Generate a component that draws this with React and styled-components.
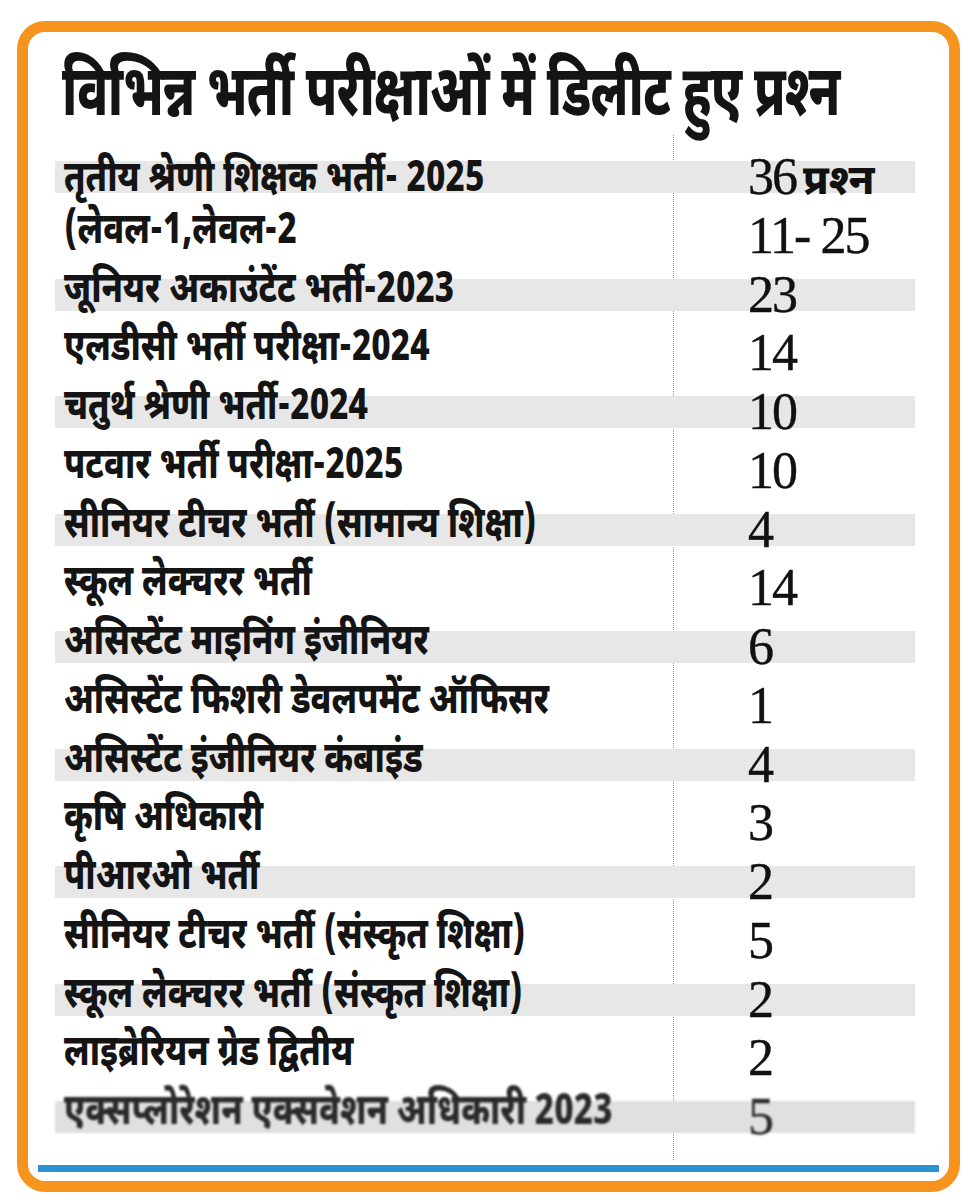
import React from "react";
import styled, { createGlobalStyle } from "styled-components";

const GlobalStyle = createGlobalStyle`
  html, body {
    margin: 0;
    padding: 0;
    background: #ffffff;
  }
  body {
    font-family: "Noto Sans Devanagari", "Lohit Devanagari", "Noto Sans", sans-serif;
    color: #141414;
  }
`;

const DEVA = `"Noto Sans Devanagari", "Lohit Devanagari", "Noto Sans", sans-serif`;

const rows = [
  { label: "तृतीय श्रेणी शिक्षक भर्ती- 2025", count: "36", unit: "प्रश्\u200Dन" },
  { label: "(लेवल-1,लेवल-2", count: "11- 25" },
  { label: "जूनियर अकाउंटेंट भर्ती-2023", count: "23" },
  { label: "एलडीसी भर्ती परीक्षा-2024", count: "14" },
  { label: "चतुर्थ श्रेणी भर्ती-2024", count: "10" },
  { label: "पटवार भर्ती परीक्षा-2025", count: "10" },
  { label: "सीनियर टीचर भर्ती (सामान्य शिक्षा)", count: "4" },
  { label: "स्कूल लेक्चरर भर्ती", count: "14" },
  { label: "असिस्टेंट माइनिंग इंजीनियर", count: "6" },
  { label: "असिस्टेंट फिशरी डेवलपमेंट ऑफिसर", count: "1" },
  { label: "असिस्टेंट इंजीनियर कंबाइंड", count: "4" },
  { label: "कृषि अधिकारी", count: "3" },
  { label: "पीआरओ भर्ती", count: "2" },
  { label: "सीनियर टीचर भर्ती (संस्कृत शिक्षा)", count: "5" },
  { label: "स्कूल लेक्चरर भर्ती (संस्कृत शिक्षा)", count: "2" },
  { label: "लाइब्रेरियन ग्रेड द्वितीय", count: "2" },
  { label: "एक्सप्लोरेशन एक्सवेशन अधिकारी 2023", count: "5", faded: true },
];

const Frame = styled.div`
  box-sizing: border-box;
  width: 943px;
  height: 1171px;
  margin: 21px 0 0 17px;
  border: 11px solid #f7941d;
  border-radius: 28px;
  background: #ffffff;
  display: flex;
  flex-direction: column;
  overflow: hidden;
`;

const Title = styled.h1`
  margin: 0;
  height: 129px;
  padding: 26px 0 0 34px;
  box-sizing: border-box;
  font-size: 70px;
  line-height: 80px;
  white-space: nowrap;
`;

const TitleText = styled.span`
  display: inline-block;
  font-family: ${DEVA};
  font-weight: 800;
  letter-spacing: -1px;
  color: #141414;
  transform: scaleX(0.72);
  transform-origin: left center;
`;

const Table = styled.div`
  position: relative;
  margin-left: 27px;
  width: 860px;

  &::before {
    content: "";
    position: absolute;
    left: 618px;
    top: -26px;
    bottom: 0;
    border-left: 1px dotted #9a9a9a;
    z-index: 0;
  }
`;

const Row = styled.div`
  position: relative;
  z-index: 1;
  height: 58.75px;
`;

const Band = styled.div`
  display: grid;
  grid-template-columns: 693px 1fr;
  align-items: end;
  height: 32px;
  background: ${(p) => (p.$striped ? (p.$faded ? "#e0e0e0" : "#e7e7e7") : "transparent")};
  filter: ${(p) => (p.$faded ? "blur(0.8px)" : "none")};
`;

const Label = styled.span`
  padding-left: 9px;
  white-space: nowrap;
  font-size: 43px;
  line-height: 32px;
`;

const LabelText = styled.span`
  display: inline-block;
  font-family: ${DEVA};
  font-weight: 800;
  color: ${(p) => (p.$faded ? "#2a2a2a" : "#141414")};
  transform: translateY(-3px) scaleX(0.79);
  transform-origin: left center;
`;

const Count = styled.span`
  font-family: "Liberation Serif", "Times New Roman", serif;
  font-size: 52px;
  line-height: 32px;
  letter-spacing: -2px;
  white-space: nowrap;
  color: ${(p) => (p.$faded ? "#2a2a2a" : "#111111")};
  -webkit-text-stroke: 0.4px currentColor;
`;

const Unit = styled.span`
  display: inline-block;
  margin-left: 7px;
  font-family: ${DEVA};
  font-weight: 800;
  font-size: 41px;
  letter-spacing: 0;
  -webkit-text-stroke: 0;
`;

const Rule = styled.div`
  height: 7px;
  margin: 5px 10px 0 10px;
  background: #2b93d1;
`;

export default function App() {
  return (
    <>
      <GlobalStyle />
      <Frame>
        <Title>
          <TitleText>विभिन्न भर्ती परीक्षाओं में डिलीट हुए प्रश्&zwj;न</TitleText>
        </Title>
        <Table>
          {rows.map((r, i) => (
            <Row key={i}>
              <Band $striped={i % 2 === 0} $faded={r.faded}>
                <Label>
                  <LabelText $faded={r.faded}>{r.label}</LabelText>
                </Label>
                <Count $faded={r.faded}>
                  {r.count}
                  {r.unit && <Unit>{r.unit}</Unit>}
                </Count>
              </Band>
            </Row>
          ))}
        </Table>
        <Rule />
      </Frame>
    </>
  );
}
